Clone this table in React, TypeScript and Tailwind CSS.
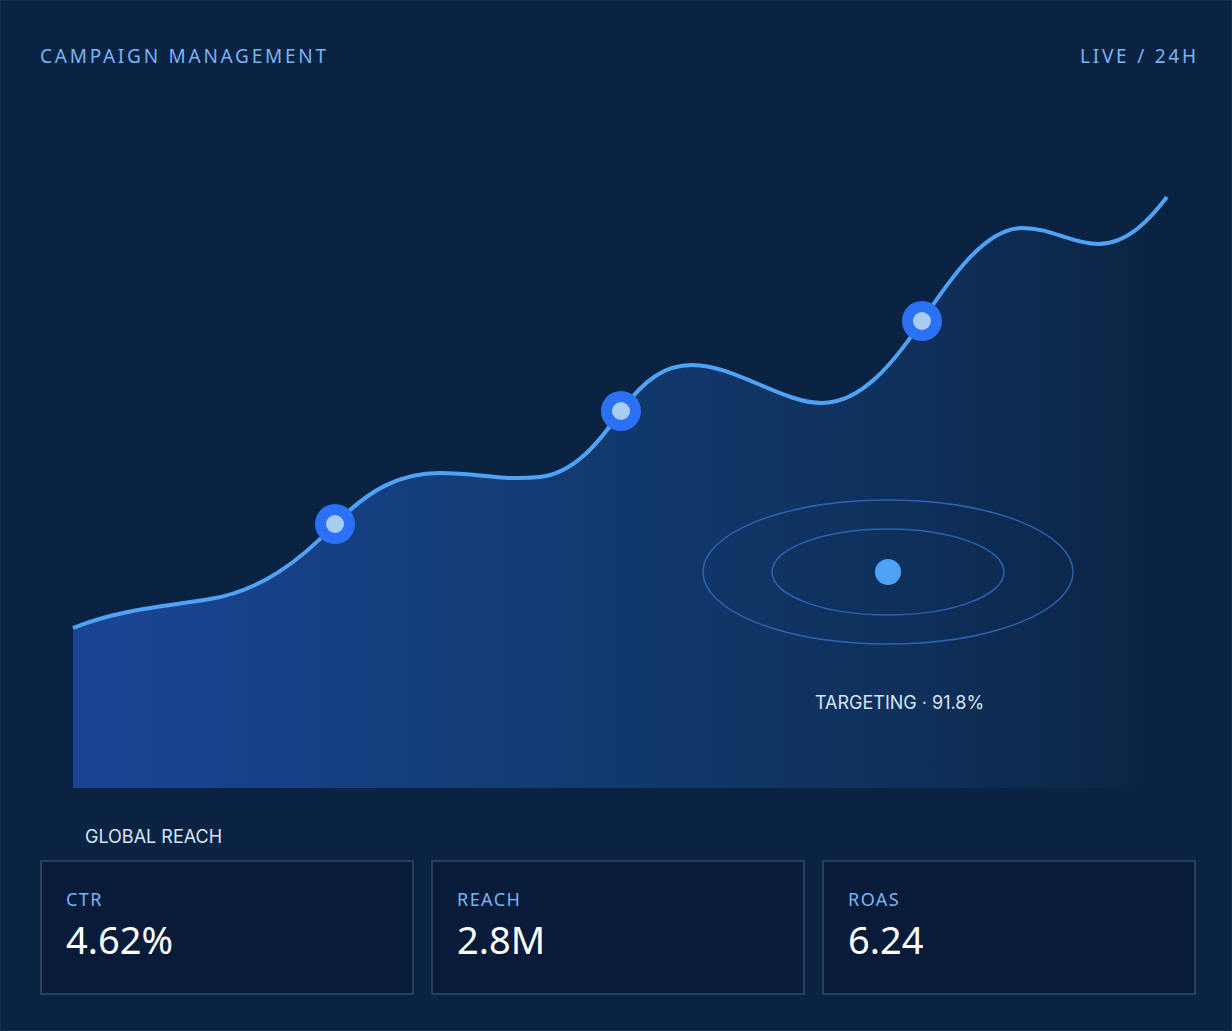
import React from 'react';

const line =
  'M73,627 C120,608 170,605 210,598 C260,590 300,560 335,523 C370,488 400,472 440,472 C480,472 500,480 540,476 C575,472 600,440 621,410 C645,378 665,364 692,364 C735,364 782,402 822,402 C862,402 895,360 922,320 C950,278 985,227 1022,227 C1052,227 1072,243 1098,243 C1128,243 1150,218 1167,196';

const metrics = [
  { label: 'CTR', value: '4.62%' },
  { label: 'REACH', value: '2.8M' },
  { label: 'ROAS', value: '6.24' },
];

function Chart() {
  return (
    <svg width="1156" height="700" viewBox="40 100 1156 700" className="block">
      <defs>
        <linearGradient id="area" x1="73" y1="0" x2="1145" y2="0" gradientUnits="userSpaceOnUse">
          <stop offset="0" stopColor="#1a4596" />
          <stop offset="0.5" stopColor="#12396e" />
          <stop offset="0.8" stopColor="#0e2f59" />
          <stop offset="1" stopColor="#0b2444" />
        </linearGradient>
        <clipPath id="clip">
          <rect x="73" y="100" width="1072" height="687" />
        </clipPath>
      </defs>
      <path d={`${line} L1167,787 L73,787 Z`} fill="url(#area)" clipPath="url(#clip)" />
      <path d={line} fill="none" stroke="#4ea3f6" strokeWidth="4" strokeLinecap="butt" />

      {[
        [335, 523],
        [621, 410],
        [922, 320],
      ].map(([cx, cy]) => (
        <g key={cx}>
          <circle cx={cx} cy={cy} r="20" fill="#2a71f5" />
          <circle cx={cx} cy={cy} r="9" fill="#a9cdf2" />
        </g>
      ))}

      <ellipse cx="888" cy="571" rx="185" ry="72" fill="none" stroke="#2a63b3" strokeWidth="1.5" />
      <ellipse cx="888" cy="571" rx="116" ry="43" fill="none" stroke="#2a63b3" strokeWidth="1.5" />
      <circle cx="888" cy="571" r="13" fill="#4ea3f8" />
    </svg>
  );
}

export default function App() {
  return (
    <div className="w-[1232px] h-[1031px] bg-[#0b2342] border border-[#14304f] overflow-hidden font-['Noto_Sans',sans-serif]">
      <div className="pl-[39px] pr-[35px] pt-[41px]">
        {/* Header */}
        <div className="flex items-center justify-between text-[19px] leading-[28px] tracking-[0.145em] text-[#78b5f3]">
          <span>CAMPAIGN MANAGEMENT</span>
          <span className="-mr-[0.145em]">LIVE / 24H</span>
        </div>

        {/* Chart */}
        <div className="relative mt-[31px]">
          <Chart />
          <div className="absolute left-[775px] top-[589px] text-[18px] leading-[26px] text-[#d6e5f7] font-['Inter',sans-serif]">
            TARGETING · 91.8%
          </div>
        </div>

        <div className="mt-[23px] pl-[45px] text-[18px] leading-[26px] text-[#d6e5f7] font-['Inter',sans-serif]">
          GLOBAL REACH
        </div>

        {/* Metrics */}
        <div className="mt-[10px] grid grid-cols-3 gap-[17px]">
          {metrics.map((m) => (
            <div
              key={m.label}
              className="h-[135px] bg-[#081c39] border-2 border-[#273e5c] px-6 pt-[24px]"
            >
              <div className="text-[18px] leading-[26px] tracking-[0.08em] text-[#78b5f3]">{m.label}</div>
              <div className="mt-[3px] text-[38px] leading-[48px] text-white">{m.value}</div>
            </div>
          ))}
        </div>
      </div>
    </div>
  );
}
